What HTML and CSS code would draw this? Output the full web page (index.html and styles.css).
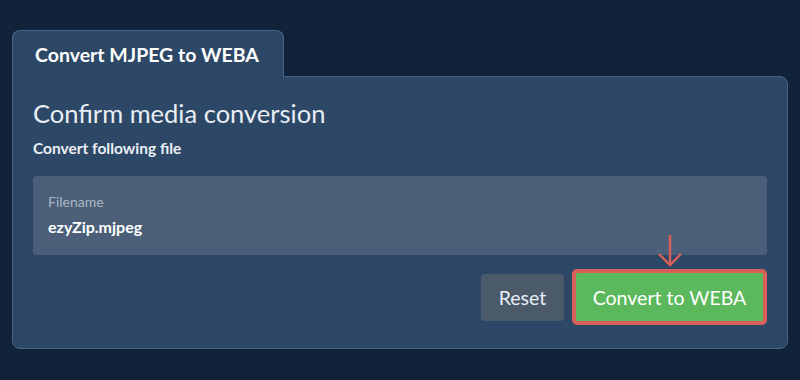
FILE: index.html
```html
<!DOCTYPE html>
<html lang="en">
    <head>
        <meta charset="utf-8" />
        <title>Convert MJPEG to WEBA</title>
        <link rel="stylesheet" href="styles.css">
    </head>
    <body>
        <div class="converter">
            <div class="tabs">
                <span class="tab">Convert MJPEG to WEBA</span>
            </div>
            <main class="panel">
                <h2 class="title">Confirm media conversion</h2>
                <p class="subtitle">Convert following file</p>
                <section class="file-box">
                    <span class="file-label">Filename</span>
                    <span class="file-name">ezyZip.mjpeg</span>
                </section>
                <div class="actions">
                    <button class="btn btn-reset">Reset</button>
                    <div class="convert-wrap">
                        <svg class="arrow" width="30" height="34" viewBox="0 0 30 34">
                            <path d="M15 1 V31 M4 20 L15 31 L26 20" fill="none" stroke="#d9605a" stroke-width="2.4" />
                        </svg>
                        <button class="btn btn-convert">Convert to WEBA</button>
                    </div>
                </div>
            </main>
        </div>
    </body>
</html>
```

FILE: styles.css
```css
:root {
    --page: #10233a;
    --panel: #2d4866;
    --line: #4a6583;
}

* {
    margin: 0;
    padding: 0;
    box-sizing: border-box;
    font-family: "Lato", "Open Sans", sans-serif;
}

body {
    background: var(--page);
    padding: 30px 12px;
}

.tabs {
    display: flex;
}

.tab {
    display: block;
    width: 272px;
    height: 47px;
    padding: 12px 0 0 22px;
    background: var(--panel);
    border: 1px solid var(--line);
    border-bottom: none;
    border-radius: 8px 8px 0 0;
    margin-bottom: -1px;
    position: relative;
    z-index: 1;
    color: #fff;
    font-size: 19.5px;
    font-weight: bold;
}

.panel {
    background: var(--panel);
    border: 1px solid var(--line);
    border-radius: 0 8px 8px 8px;
    padding: 21px 20px 21px 20px;
    height: 273px;
}

.title {
    color: #e9eef4;
    font-size: 25.5px;
    font-weight: normal;
    line-height: 30px;
}

.subtitle {
    color: #e9eef4;
    font-size: 15.5px;
    font-weight: bold;
    margin-top: 11px;
}

.file-box {
    display: flex;
    flex-direction: column;
    margin-top: 19px;
    background: #4b6078;
    border-radius: 4px;
    height: 79px;
    padding: 17px 15px 0;
}

.file-label {
    color: #a9b6c4;
    font-size: 14px;
}

.file-name {
    color: #fff;
    font-size: 16px;
    font-weight: bold;
    margin-top: 7px;
}

.actions {
    display: flex;
    justify-content: flex-end;
    align-items: flex-end;
    gap: 8px;
    margin-top: -21px;
}

.convert-wrap {
    display: flex;
    flex-direction: column;
    align-items: center;
}

.arrow {
    display: block;
    margin-bottom: 1px;
}

.btn {
    border: none;
    color: #fff;
    font-size: 19.5px;
    border-radius: 4px;
    cursor: pointer;
}

.btn-reset {
    background: #4b5a6b;
    width: 83px;
    height: 47px;
    margin-bottom: 4px;
    color: #e9eef4;
}

.btn-convert {
    background: #5cb85c;
    width: 195px;
    height: 56px;
    border: 4px solid #d9605a;
    border-radius: 5px;
}
```
